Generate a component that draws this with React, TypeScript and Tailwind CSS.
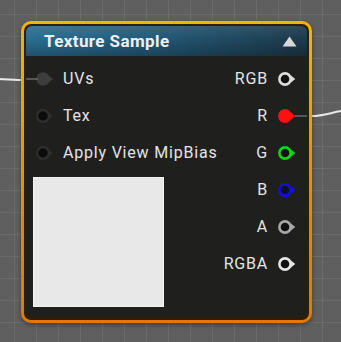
import React from "react";

function OutPin({ color, fill }: { color: string; fill?: string }) {
  return (
    <svg width="20" height="16" viewBox="0 0 20 16" className="shrink-0">
      <circle cx="8" cy="8" r="5.6" fill={fill ?? "#111"} stroke={color} strokeWidth="2.6" />
      <polygon points="14,4.6 18.3,8 14,11.4" fill={color} />
    </svg>
  );
}

function InPin({ variant }: { variant: "connected" | "empty" }) {
  if (variant === "connected") {
    return (
      <svg width="20" height="16" viewBox="0 0 20 16" className="shrink-0">
        <circle cx="8" cy="8" r="6.8" fill="#3d3d3d" />
        <polygon points="13.6,4.4 18,8 13.6,11.6" fill="#3d3d3d" />
      </svg>
    );
  }
  return (
    <svg width="20" height="16" viewBox="0 0 20 16" className="shrink-0">
      <circle cx="8" cy="8" r="5.8" fill="#0b0b0b" stroke="#2f2f2f" strokeWidth="2.2" />
      <polygon points="14,4.8 17.4,8 14,11.2" fill="#2f2f2f" />
    </svg>
  );
}

const outputs = [
  { label: "RGB", color: "#dcdcdc" },
  { label: "R", color: "#ff1010", fill: "#ff1010" },
  { label: "G", color: "#14d414" },
  { label: "B", color: "#1010e0" },
  { label: "A", color: "#a8a8a8" },
  { label: "RGBA", color: "#e6e6e6" },
];

const inputs: { label: string; variant: "connected" | "empty" }[] = [
  { label: "UVs", variant: "connected" },
  { label: "Tex", variant: "empty" },
  { label: "Apply View MipBias", variant: "empty" },
];

export default function App() {
  return (
    <div
      className="relative w-[341px] h-[342px] overflow-hidden bg-[#5f5f5f] bg-[linear-gradient(to_right,#6b6b6b_1px,transparent_1px),linear-gradient(to_bottom,#6b6b6b_1px,transparent_1px)] bg-[size:22px_22px] bg-[position:14px_14px] pl-[21px] pt-[21px]"
      style={{ fontFamily: "Roboto, 'Noto Sans', sans-serif" }}
    >
      <svg className="absolute left-0 top-0 pointer-events-none" width="341" height="342">
        <path d="M0 79 C 8 79.5, 14 80, 22 80" stroke="#e8e8e8" strokeWidth="2" fill="none" />
        <path d="M312 116 C 322 116, 330 113, 341 111" stroke="#e8e8e8" strokeWidth="2" fill="none" />
      </svg>
      <div className="relative w-[291px] h-[302px] rounded-[10px] p-[3px] bg-[linear-gradient(to_bottom,#f6b400,#e98a00_60%,#e27800)] shadow-[0_2px_4px_rgba(0,0,0,0.35)]">
        <div className="w-full h-full rounded-[7px] p-[2px] pb-[4px] bg-[#2a1f0f] flex flex-col overflow-hidden">
          <div className="relative h-[30px] shrink-0 rounded-t-[6px] bg-[linear-gradient(to_right,#2b6f95,#235a78_45%,#1d3a4b)] flex items-center justify-between pl-[18px] pr-[10px]">
            <div className="absolute inset-0 rounded-t-[6px] bg-[linear-gradient(to_bottom,rgba(255,255,255,0.08),rgba(0,0,0,0)_40%,rgba(0,0,0,0.25))]" />
            <span className="relative text-[17px] font-bold tracking-[0.4px] text-[#f0f0f0] leading-none">Texture Sample</span>
            <svg className="relative" width="15" height="11" viewBox="0 0 15 11">
              <polygon points="7.5,0.5 14.5,10.5 0.5,10.5" fill="#d8d8d8" />
            </svg>
          </div>
          <div className="relative flex-1 bg-[#1f201e] rounded-b-[6px] flex justify-between pt-[4px]">
            <svg className="absolute left-0 top-[22px]" width="12" height="3">
              <line x1="0" y1="1" x2="12" y2="1" stroke="#6a6a6a" strokeWidth="1.5" />
            </svg>
            <svg className="absolute right-0 top-[59px]" width="12" height="3">
              <line x1="0" y1="1" x2="12" y2="1" stroke="#6a6a6a" strokeWidth="1.5" />
            </svg>
            <div className="flex flex-col">
              {inputs.map((i) => (
                <div key={i.label} className="h-[37px] flex items-center gap-[8px] pl-[9px]">
                  <InPin variant={i.variant} />
                  <span className="text-[16px] tracking-[0.8px] text-[#e4e4e4] leading-none">{i.label}</span>
                </div>
              ))}
              <div className="ml-[7px] mt-[6px] w-[131px] h-[130px] bg-[#e8e8e8] border border-[#f2f2f2]" />
            </div>
            <div className="flex flex-col pr-[10px]">
              {outputs.map((o) => (
                <div key={o.label} className="h-[37px] flex items-center justify-end gap-[9px]">
                  <span className="text-[16px] tracking-[0.8px] text-[#e4e4e4] leading-none">{o.label}</span>
                  <OutPin color={o.color} fill={o.fill} />
                </div>
              ))}
            </div>
          </div>
        </div>
      </div>
    </div>
  );
}
